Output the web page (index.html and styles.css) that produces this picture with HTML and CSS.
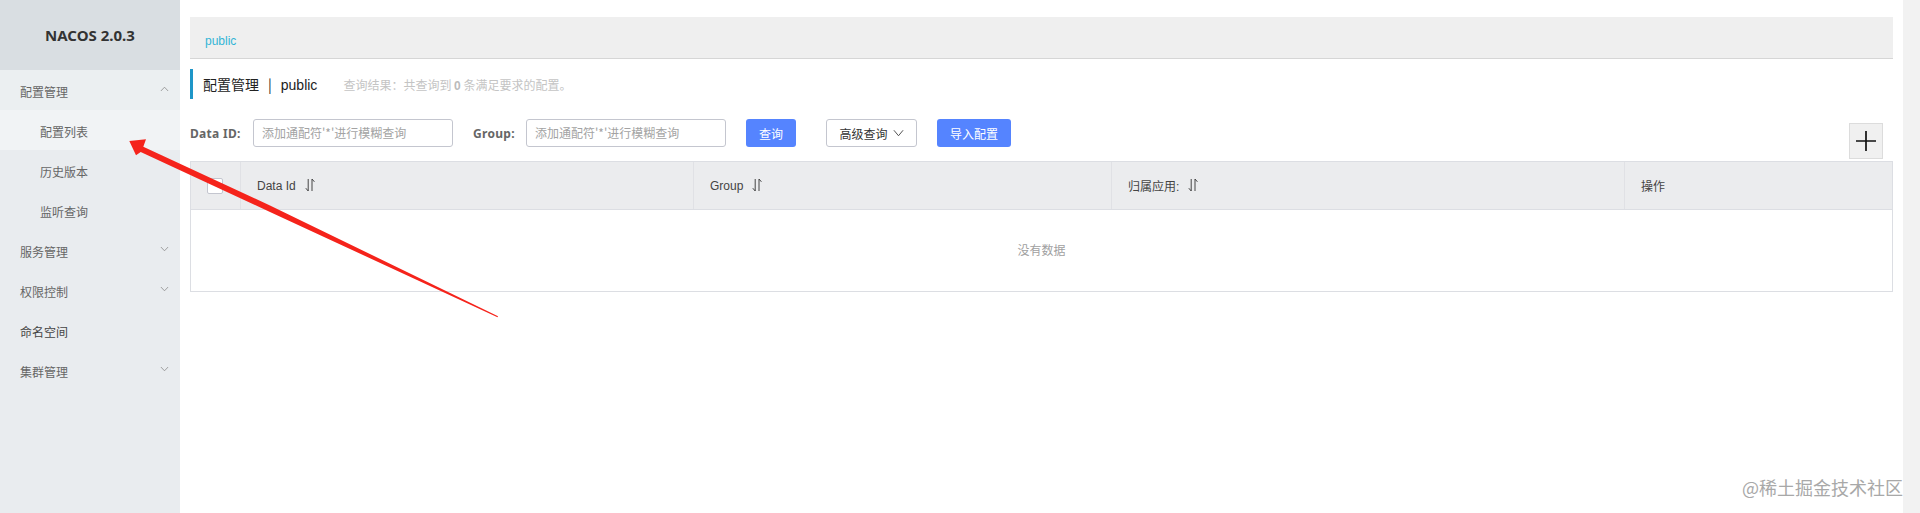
FILE: index.html
```html
<!DOCTYPE html>
<html lang="zh-CN">
<head>
<meta charset="utf-8">
<title>NACOS 2.0.3</title>
<link rel="stylesheet" href="styles.css">
</head>
<body>
<div class="app">
  <aside class="sidebar">
    <div class="brand">NACOS 2.0.3</div>
    <nav class="menu">
      <div class="item open"><span>配置管理</span>
        <svg class="chev" viewBox="0 0 10 6"><path d="M1 5.2 5 1l4 4.2"/></svg></div>
      <div class="item sub active"><span>配置列表</span></div>
      <div class="item sub"><span>历史版本</span></div>
      <div class="item sub"><span>监听查询</span></div>
      <div class="item"><span>服务管理</span>
        <svg class="chev" viewBox="0 0 10 6"><path d="M1 .8 5 5l4-4.2"/></svg></div>
      <div class="item"><span>权限控制</span>
        <svg class="chev" viewBox="0 0 10 6"><path d="M1 .8 5 5l4-4.2"/></svg></div>
      <div class="item dark"><span>命名空间</span></div>
      <div class="item"><span>集群管理</span>
        <svg class="chev" viewBox="0 0 10 6"><path d="M1 .8 5 5l4-4.2"/></svg></div>
    </nav>
  </aside>

  <main class="main">
    <div class="ns-strip"><a class="ns-link">public</a></div>

    <div class="title-row">
      <h1 class="title">配置管理<span class="sep">|</span><span class="ns-name">public</span></h1>
      <p class="hint">查询结果：共查询到 <b>0</b> 条满足要求的配置。</p>
    </div>

    <div class="search-row">
      <label class="label">Data ID:</label>
      <div class="input">添加通配符'*'进行模糊查询</div>
      <label class="label group-label">Group:</label>
      <div class="input">添加通配符'*'进行模糊查询</div>
      <button class="btn primary query">查询</button>
      <button class="btn outline">高级查询
        <svg class="btn-chev" viewBox="0 0 12 8"><path d="M1 1l5 6 5-6"/></svg></button>
      <button class="btn primary import">导入配置</button>
      <button class="add" aria-label="add">
        <svg viewBox="0 0 20 20"><path d="M10 0v20M0 10h20"/></svg></button>
    </div>

    <div class="table">
      <div class="thead">
        <div class="th check"><span class="checkbox"></span></div>
        <div class="th">Data Id
          <svg class="sort" viewBox="0 0 10 14"><path d="M3.2 1v12L.8 10.2M7 13V1l2.4 2.8"/></svg></div>
        <div class="th">Group
          <svg class="sort" viewBox="0 0 10 14"><path d="M3.2 1v12L.8 10.2M7 13V1l2.4 2.8"/></svg></div>
        <div class="th">归属应用:
          <svg class="sort" viewBox="0 0 10 14"><path d="M3.2 1v12L.8 10.2M7 13V1l2.4 2.8"/></svg></div>
        <div class="th">操作</div>
      </div>
      <div class="empty">没有数据</div>
    </div>
  </main>

  <div class="scroll-track"></div>
</div>

<svg class="arrow" viewBox="0 0 1920 513" aria-hidden="true">
  <polygon points="129.3,141 146,139.3 143.3,146.7 270,205.5 498,316.2 497.5,317.2 270,212 140.7,152 136,155.3"/>
</svg>
<div class="watermark">@稀土掘金技术社区</div>
</body>
</html>
```

FILE: styles.css
```css
* { box-sizing: border-box; }
html, body { margin: 0; height: 513px; overflow: hidden; background: #fff; }
body {
  font-family: "Noto Sans CJK SC", "Liberation Sans", sans-serif;
  font-size: 12px;
  color: #666;
  position: relative;
}
.app { display: flex; height: 513px; }

.sidebar { width: 180px; flex: none; background: #e9ecef; }
.brand {
  height: 70px;
  display: flex; align-items: center; justify-content: center;
  background: #d9dee2;
  color: #333;
  font-family: "Noto Sans", sans-serif;
  font-weight: 700;
  font-size: 15px;
}
.item {
  height: 40px;
  padding: 2px 10px 0 20px;
  display: flex; align-items: center; justify-content: space-between;
  color: #666;
}
.item.open { background: #ebeff1; }
.item.sub { padding-left: 40px; }
.item.active { background: #f1f3f5; }
.item.dark { color: #444; }
.chev { width: 9px; height: 6px; margin-right: 1px; margin-top: -4px; fill: none; stroke: #8c8c8c; stroke-width: .9; }

.main { flex: 1; min-width: 0; padding: 17px 10px 0; }
.ns-strip {
  height: 42px;
  background: #efefef;
  border-bottom: 1px solid #d6d6d6;
  padding: 13px 0 0 15px;
  line-height: 20px;
}
.ns-link { color: #33b5d6; font-family: "Liberation Sans", sans-serif; font-size: 12px; }

.title-row { display: flex; align-items: center; height: 30px; margin-top: 10px; }
.title {
  margin: 0;
  height: 30px;
  border-left: 3px solid #1e96c8;
  padding-left: 10px;
  font-size: 14px;
  font-weight: 400;
  line-height: 30px;
  color: #222;
}
.sep { margin: 0 9px; }
.ns-name { font-family: "Liberation Sans", sans-serif; }
.hint { margin: 0 0 0 26px; font-size: 12px; color: #c4c4c4; }
.hint b { color: #bbb; font-family: "Liberation Sans", sans-serif; }

.search-row { display: flex; align-items: center; height: 28px; margin-top: 20px; }
.label { font-family: "Noto Sans", sans-serif; font-weight: 700; color: #666; width: 63px; flex: none; letter-spacing: .3px; }
.group-label { width: 53px; margin-left: 20px; }
.input {
  width: 200px; height: 28px; flex: none;
  border: 1px solid #c4c6cf;
  border-radius: 3px;
  padding-left: 8px;
  line-height: 26px;
  color: #a3a3a3;
  background: #fff;
}
.btn {
  height: 28px; flex: none;
  border-radius: 3px;
  font: inherit;
  padding: 0;
  display: flex; align-items: center; justify-content: center;
}
.primary { background: #5584ff; border: 0; color: #fff; }
.query { width: 50px; margin-left: 20px; }
.outline { width: 91px; margin-left: 30px; background: #fff; border: 1px solid #c4c6cf; color: #333; }
.btn-chev { width: 11px; height: 8px; margin-left: 5px; fill: none; stroke: #444; stroke-width: 1; }
.import { width: 74px; margin-left: 20px; }
.add {
  width: 34px; height: 36px; flex: none;
  margin: 4px 10px 0 auto;
  align-self: flex-start;
  padding: 0;
  background: #f0f0f0;
  border: 1px solid #dcdcdc;
  display: flex; align-items: center; justify-content: center;
}
.add svg { width: 20px; height: 20px; fill: none; stroke: #111; stroke-width: 1.7; }

.table { margin-top: 14px; border: 1px solid #dcdee3; }
.thead {
  display: grid;
  grid-template-columns: 50px 453px 418px 513px 1fr;
  height: 48px;
  background: #ebecee;
  border-bottom: 1px solid #dcdee3;
}
.th {
  display: flex; align-items: center;
  padding-left: 16px;
  border-right: 1px solid #e0e1e5;
  color: #444;
  font-family: "Liberation Sans", "Noto Sans CJK SC", sans-serif;
}
.th:last-child { border-right: 0; }
.th.check { padding-left: 16px; }
.checkbox {
  width: 16px; height: 16px;
  background: #fff;
  border: 1px solid #c4c6cf;
  border-radius: 2px;
}
.sort { width: 10px; height: 14px; margin-left: 9px; margin-top: -2px; fill: none; stroke: #444; stroke-width: 1; }
.empty {
  height: 81px;
  padding-bottom: 2px;
  display: flex; align-items: center; justify-content: center;
  color: #a0a0a0;
}

.scroll-track { width: 17px; flex: none; background: #f2f2f2; }

.arrow { position: absolute; left: 0; top: 0; width: 1920px; height: 513px; pointer-events: none; }
.arrow polygon { fill: #f5231b; }
.watermark {
  position: absolute;
  right: 17px; bottom: 13px;
  font-size: 18px;
  line-height: 26px;
  color: #a8a8a8;
  white-space: nowrap;
}
```
